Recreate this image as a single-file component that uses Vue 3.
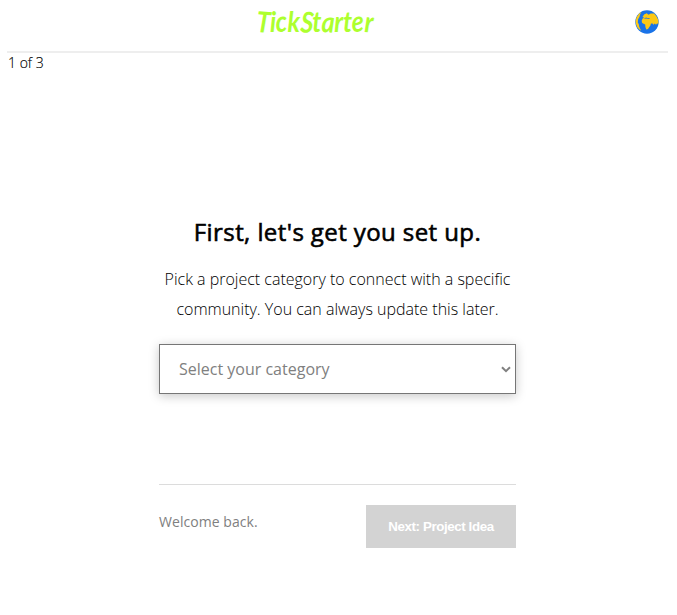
<script setup>
import { ref } from 'vue'

const category = ref('')
const categories = ['Art', 'Design', 'Film', 'Food', 'Games', 'Music', 'Technology']
</script>

<template>
  <div class="page">
    <header class="header">
      <span></span>
      <svg class="logo" width="134" height="44" viewBox="0 0 134 44" role="img" aria-label="TickStarter">
        <text x="7" y="32" textLength="117" lengthAdjust="spacingAndGlyphs" rotate="4 0 -3 0 5 0 3 0 0 -3 3">TickStarter</text>
      </svg>
      <svg class="globe" width="24" height="24" viewBox="0 0 24 24" aria-hidden="true">
        <circle cx="12" cy="12" r="11.7" fill="#1a73e8" />
        <path fill="#fcc816" d="m7.5 7 1.6-2.6 2.6-1.2 1.8 1.6 2.2-1.4 3.4.2 2.3 2.6 1.7 3.2.5 4.4-1.6-.2-1 1.2-1.2-1.4-1.3 1.3-1.3-1.5-1.3.6-.5 1.6-1.1 1.5-1.3 2.1-1.7.5-.9-2.6-.2-2.4-1.7-.8-1.5-1-.3-2.2 1-1.9 1.5-.8Z" />
        <path fill="#fcc816" d="M6.3 2 3.7 4 1.6 7.3.6 11l.4 3 1.2 3.2 2 2.4 2 1.2-2-4-.4-2.6-1-1.8.3-3.2 1.3-2.2.8-2.8Z" />
        <path fill="#1a73e8" d="m9.4 8.2 1.8-.8 1.6.8 1.6-.1.4.7-1.7.2-1.8-.4-1.9.1Z" />
      </svg>
    </header>

    <div class="step">1 of 3</div>

    <main class="setup">
      <h1>First, let's get you set up.</h1>
      <p>Pick a project category to connect with a specific community. You can always update this later.</p>
      <div class="field">
        <select v-model="category" class="category">
          <option value="">Select your category</option>
          <option v-for="name in categories" :key="name" :value="name">{{ name }}</option>
        </select>
        <svg class="chevron" width="10" height="7" viewBox="0 0 10 7" aria-hidden="true">
          <path d="M1 1.2 5 5.2 9 1.2" fill="none" stroke="#808080" stroke-width="2" />
        </svg>
      </div>
      <footer class="footer">
        <span class="welcome">Welcome back.</span>
        <button class="next" type="button">Next: Project Idea</button>
      </footer>
    </main>
  </div>
</template>

<style>
body {
  background: #fff;
}
</style>

<style scoped>
.page {
  box-sizing: border-box;
  height: 615px;
  padding: 0 9px 0 7px;
  overflow: hidden;
  font-family: 'Open Sans', sans-serif;
  color: #000;
}
.header {
  box-sizing: border-box;
  height: 53px;
  display: grid;
  grid-template-columns: 242px 134px 1fr;
  border-bottom: 2px solid #eee;
}
.logo {
  display: block;
  overflow: visible;
}
.logo text {
  font-family: Lato, sans-serif;
  font-size: 29px;
  font-style: italic;
  font-weight: 700;
  fill: #adff2f;
}
.globe {
  justify-self: end;
  margin: 10px 9px 0 0;
}
.step {
  height: 20px;
  padding-left: 1px;
  font-size: 14px;
  line-height: 20px;
  font-weight: 300;
  -webkit-text-stroke: 0.15px #000;
}
.setup {
  width: 357px;
  margin: 143px 0 0 152px;
}
h1 {
  margin: 0;
  font-size: 24px;
  line-height: 32px;
  font-weight: 400;
  letter-spacing: 0.41px;
  text-align: center;
  -webkit-text-stroke: 0.6px #000;
}
p {
  margin: 16px 0 20px;
  font-size: 16px;
  line-height: 30px;
  font-weight: 300;
  text-align: center;
}
.field {
  position: relative;
}
.chevron {
  position: absolute;
  top: 22px;
  right: 5px;
  pointer-events: none;
}
.category {
  appearance: none;
  display: block;
  box-sizing: border-box;
  width: 357px;
  height: 50px;
  margin: 0;
  padding: 0 20px 0 19px;
  border: 1px solid #767676;
  border-radius: 0;
  background-color: #fff;
  color: #808080;
  font: 400 16px 'Open Sans', sans-serif;
  box-shadow: 0 2px 10px rgba(0, 0, 0, 0.22);
}
.footer {
  display: flex;
  justify-content: space-between;
  align-items: flex-start;
  margin-top: 90px;
  padding-top: 20px;
  border-top: 1px solid #dcdcdc;
}
.welcome {
  padding-top: 7px;
  font-size: 14px;
  line-height: 20px;
  letter-spacing: 0.05px;
  color: #808080;
}
.next {
  width: 150px;
  height: 43px;
  padding: 0;
  border: 0;
  background: #d3d3d3;
  color: #fff;
  font: 700 13.33px 'Liberation Sans', Arial, sans-serif;
  letter-spacing: -0.4px;
}
</style>
